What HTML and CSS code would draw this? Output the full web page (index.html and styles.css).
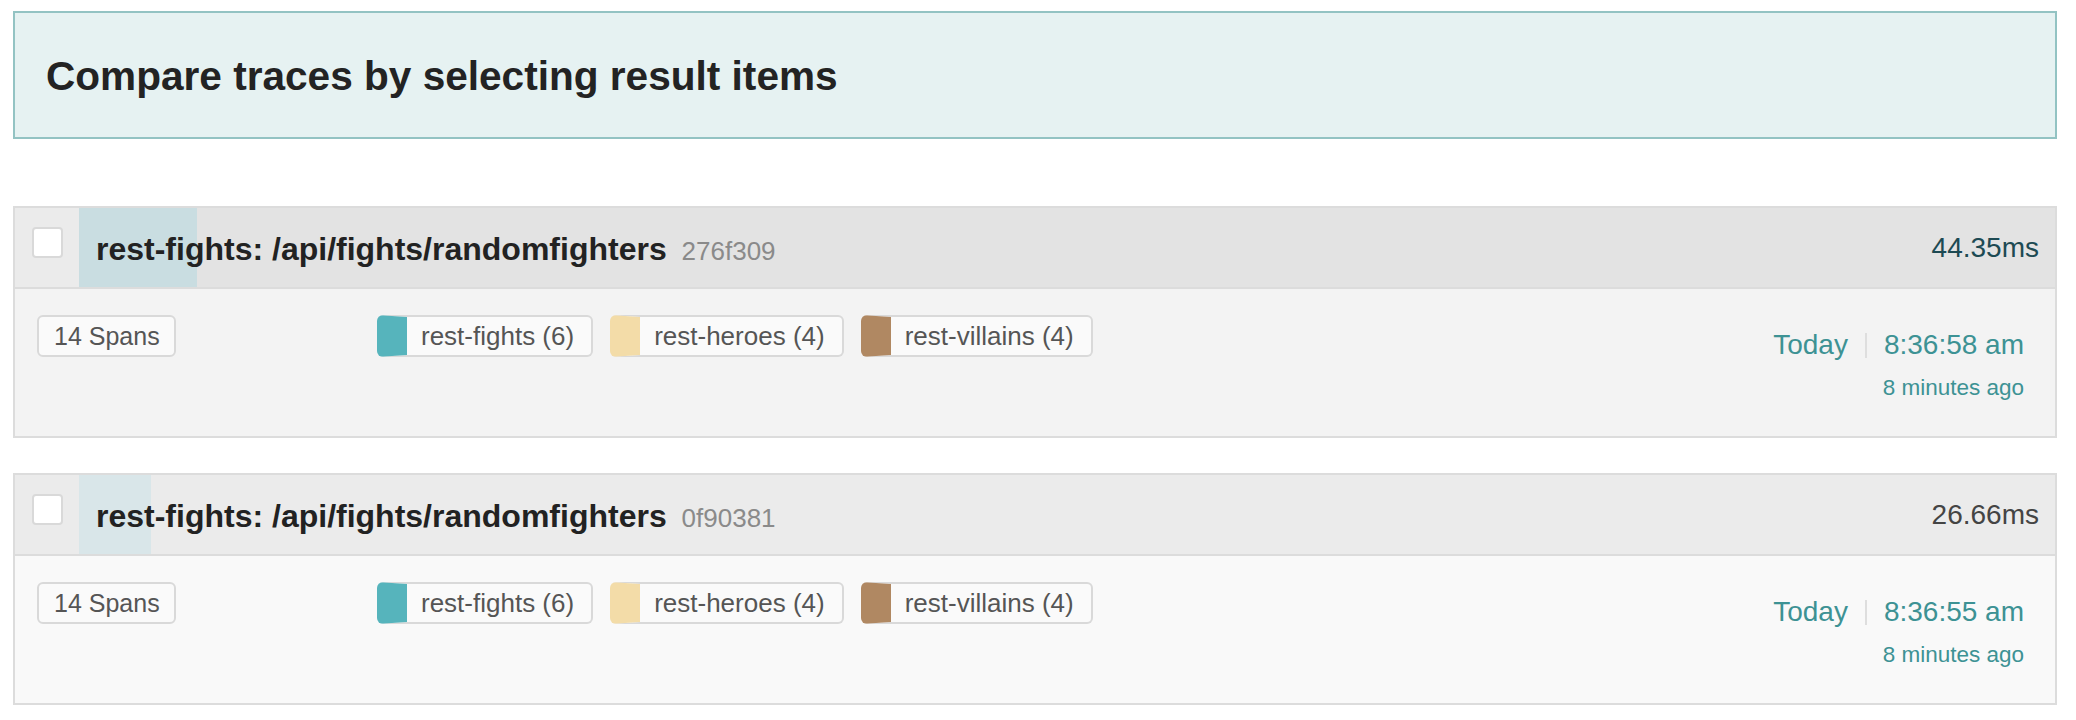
FILE: index.html
```html
<!DOCTYPE html>
<html lang="en">
<head>
<meta charset="utf-8">
<title>Compare traces</title>
<link rel="stylesheet" href="styles.css">
</head>
<body>
<div class="page">
  <div class="banner">Compare traces by selecting result items</div>

  <div class="results">
    <div class="card card--active">
      <div class="card-header">
        <div class="check-cell"><span class="checkbox"></span></div>
        <div class="title-area">
          <div class="duration-bar" style="width: 118px;"></div>
          <div class="title">rest-fights: /api/fights/randomfighters <span class="trace-id">276f309</span></div>
          <div class="duration">44.35ms</div>
        </div>
      </div>
      <div class="card-body">
        <div class="col-spans"><span class="tag tag--count">14 Spans</span></div>
        <div class="col-services">
          <span class="tag svc svc--fights">rest-fights (6)</span>
          <span class="tag svc svc--heroes">rest-heroes (4)</span>
          <span class="tag svc svc--villains">rest-villains (4)</span>
        </div>
        <div class="col-time">
          <div class="time-line"><span>Today</span><span class="sep"></span><span>8:36:58 am</span></div>
          <div class="ago">8 minutes ago</div>
        </div>
      </div>
    </div>

    <div class="card">
      <div class="card-header">
        <div class="check-cell"><span class="checkbox"></span></div>
        <div class="title-area">
          <div class="duration-bar" style="width: 72px;"></div>
          <div class="title">rest-fights: /api/fights/randomfighters <span class="trace-id">0f90381</span></div>
          <div class="duration">26.66ms</div>
        </div>
      </div>
      <div class="card-body">
        <div class="col-spans"><span class="tag tag--count">14 Spans</span></div>
        <div class="col-services">
          <span class="tag svc svc--fights">rest-fights (6)</span>
          <span class="tag svc svc--heroes">rest-heroes (4)</span>
          <span class="tag svc svc--villains">rest-villains (4)</span>
        </div>
        <div class="col-time">
          <div class="time-line"><span>Today</span><span class="sep"></span><span>8:36:55 am</span></div>
          <div class="ago">8 minutes ago</div>
        </div>
      </div>
    </div>
  </div>
</div>
</body>
</html>
```

FILE: styles.css
```css
* { box-sizing: border-box; }

html, body {
  margin: 0;
  padding: 0;
  background: #fff;
}

body {
  font-family: "Liberation Sans", Arial, Helvetica, sans-serif;
  color: #222;
}

.page {
  padding: 11px 19px 0 13px;
}

.banner {
  height: 128px;
  border: 2px solid #93c3c3;
  background: #e6f2f2;
  display: flex;
  align-items: center;
  padding-left: 31px;
  padding-top: 2px;
  font-size: 40.6px;
  font-weight: bold;
  color: #232323;
}

.results {
  margin-top: 67px;
  display: flex;
  flex-direction: column;
  gap: 35px;
}

.card {
  border: 2px solid #dcdcdc;
}

.card-header {
  display: flex;
  height: 81px;
  border-bottom: 2px solid #dcdcdc;
  background: #ebebeb;
}

.card--active .card-header .title-area {
  background: #e3e3e3;
}

.check-cell {
  width: 64px;
  flex: none;
  display: flex;
  justify-content: center;
  padding-top: 19px;
  background: #ebebeb;
}

.checkbox {
  width: 31px;
  height: 31px;
  background: #fff;
  border: 2px solid #d9d9d9;
  border-radius: 4px;
}

.title-area {
  flex: 1;
  position: relative;
  display: flex;
  align-items: center;
  padding: 0 16px 0 17px;
}

.duration-bar {
  position: absolute;
  left: 0;
  top: 0;
  bottom: 0;
  background: #d9e6e9;
}

.card--active .duration-bar {
  background: #c9dde1;
}

.title {
  position: relative;
  flex: 1;
  font-size: 32px;
  font-weight: bold;
  color: #222;
  padding-top: 3px;
}

.trace-id {
  font-size: 26px;
  font-weight: normal;
  color: #8a8a8a;
  margin-left: 6px;
}

.duration {
  position: relative;
  font-size: 28px;
  color: #444;
}

.card--active .duration {
  color: #1d4a53;
}

.card-body {
  height: 147px;
  display: grid;
  grid-template-columns: 340px 1fr auto;
  align-items: start;
  padding: 26px 31px 0 22px;
  background: #f9f9f9;
}

.card--active .card-body {
  background: #f3f3f3;
}

.tag {
  display: inline-flex;
  align-items: center;
  height: 42px;
  padding: 0 17px;
  border: 2px solid #d9d9d9;
  border-radius: 6px;
  background: #fafafa;
  font-size: 26px;
  color: #555;
}

.tag--count {
  font-size: 25px;
  padding: 0 14px 0 15px;
}

.col-services {
  display: flex;
  gap: 17px;
}

.svc {
  border-left-width: 30px;
  padding-left: 14px;
  padding-right: 17px;
}

.svc--fights { border-left-color: #56b4bc; }
.svc--heroes { border-left-color: #f3dca8; }
.svc--villains { border-left-color: #b08862; }

.col-time {
  text-align: right;
  color: #3d9294;
  padding-top: 14px;
}

.time-line {
  display: flex;
  align-items: center;
  justify-content: flex-end;
  font-size: 28px;
}

.sep {
  width: 2px;
  height: 25px;
  background: #dedede;
  margin: 0 17px 0 17px;
}

.ago {
  margin-top: 14px;
  font-size: 22.5px;
}
```
